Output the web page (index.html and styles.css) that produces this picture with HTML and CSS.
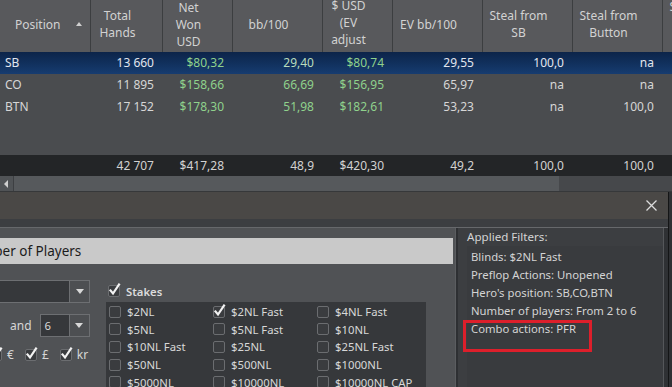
FILE: index.html
```html
<!DOCTYPE html>
<html>
<head>
<meta charset="utf-8">
<link rel="stylesheet" href="styles.css">
</head>
<body>
<div class="app">
  <div class="grid">
    <div class="cols hdr">
      <div class="hc hc-pos"><span>Position</span><span class="sort"></span></div>
      <div class="hc"><span>Total<br>Hands</span></div>
      <div class="hc"><span>Net<br>Won<br>USD</span></div>
      <div class="hc"><span>bb/100</span></div>
      <div class="hc"><span class="lift">$ USD<br>(EV<br>adjust</span></div>
      <div class="hc"><span>EV bb/100</span></div>
      <div class="hc"><span>Steal from<br>SB</span></div>
      <div class="hc"><span>Steal from<br>Button</span></div>
      <div class="hc"><span class="lift2">Steal from<br>BB</span></div>
    </div>
    <div class="cols row sel">
      <div class="c l">SB</div><div class="c">13 660</div><div class="c g">$80,32</div><div class="c gs">29,40</div><div class="c g">$80,74</div><div class="c">29,55</div><div class="c">100,0</div><div class="c">na</div><div class="c"></div>
    </div>
    <div class="cols row">
      <div class="c l">CO</div><div class="c">11 895</div><div class="c g">$158,66</div><div class="c g">66,69</div><div class="c g">$156,95</div><div class="c">65,97</div><div class="c">na</div><div class="c">na</div><div class="c"></div>
    </div>
    <div class="cols row">
      <div class="c l">BTN</div><div class="c">17 152</div><div class="c g">$178,30</div><div class="c g">51,98</div><div class="c g">$182,61</div><div class="c">53,23</div><div class="c">na</div><div class="c">100,0</div><div class="c"></div>
    </div>
    <div class="fill"></div>
    <div class="cols row total">
      <div class="c l"></div><div class="c">42 707</div><div class="c">$417,28</div><div class="c">48,9</div><div class="c">$420,30</div><div class="c">49,2</div><div class="c">100,0</div><div class="c">100,0</div><div class="c"></div>
    </div>
    <div class="hscroll">
      <div class="sbtn"><span class="larr"></span></div>
      <div class="thumb"></div>
      <div class="track"></div>
    </div>
  </div>

  <div class="dialog">
    <div class="titlebar">
      <svg class="close" viewBox="0 0 11 11"><path d="M0.5 0.5 L10.5 10.5 M10.5 0.5 L0.5 10.5"/></svg>
    </div>
    <div class="strip"></div>
    <div class="dbody">
      <div class="left">
        <div class="band">Number of Players</div>
        <div class="lower">
          <div class="players">
            <div class="combo wide"><span class="val"></span><span class="drop"><span class="darr"></span></span></div>
            <div class="androw">
              <span class="lbl">and</span>
              <div class="combo small"><span class="val">6</span><span class="drop"><span class="darr"></span></span></div>
            </div>
            <div class="cur">
              <span class="cb on"><svg viewBox="0 0 12 12"><path d="M2.5 6.5 L5 9.5 L11 0.5"/></svg></span><span class="lbl">€</span>
              <span class="cb on gap"><svg viewBox="0 0 12 12"><path d="M2.5 6.5 L5 9.5 L11 0.5"/></svg></span><span class="lbl">£</span>
              <span class="cb on gap"><svg viewBox="0 0 12 12"><path d="M2.5 6.5 L5 9.5 L11 0.5"/></svg></span><span class="lbl">kr</span>
            </div>
          </div>
          <div class="stakes">
            <div class="sh">
              <span class="cb on"><svg viewBox="0 0 12 12"><path d="M2.5 6.5 L5 9.5 L11 0.5"/></svg></span><span class="shl">Stakes</span>
            </div>
            <div class="sbox">
              <div class="it"><span class="cb"></span>$2NL</div>
              <div class="it"><span class="cb on"><svg viewBox="0 0 12 12"><path d="M2.5 6.5 L5 9.5 L11 0.5"/></svg></span>$2NL Fast</div>
              <div class="it"><span class="cb"></span>$4NL Fast</div>
              <div class="it"><span class="cb"></span>$5NL</div>
              <div class="it"><span class="cb"></span>$5NL Fast</div>
              <div class="it"><span class="cb"></span>$10NL</div>
              <div class="it"><span class="cb"></span>$10NL Fast</div>
              <div class="it"><span class="cb"></span>$25NL</div>
              <div class="it"><span class="cb"></span>$25NL Fast</div>
              <div class="it"><span class="cb"></span>$50NL</div>
              <div class="it"><span class="cb"></span>$500NL</div>
              <div class="it"><span class="cb"></span>$1000NL</div>
              <div class="it"><span class="cb"></span>$5000NL</div>
              <div class="it"><span class="cb"></span>$10000NL</div>
              <div class="it"><span class="cb"></span>$10000NL CAP</div>
            </div>
          </div>
        </div>
      </div>
      <div class="divider"></div>
      <div class="panel">
        <div class="ptitle">Applied Filters:</div>
        <div class="plist">
          <div class="pi">Blinds: $2NL Fast</div>
          <div class="pi">Preflop Actions: Unopened</div>
          <div class="pi">Hero's position: SB,CO,BTN</div>
          <div class="pi">Number of players: From 2 to 6</div>
          <div class="pi">Combo actions: PFR</div>
        </div>
        <div class="mark"></div>
      </div>
      <div class="pscroll"></div>
    </div>
  </div>
</div>
</body>
</html>
```

FILE: styles.css
```css
* { box-sizing: border-box; }
html, body { margin: 0; padding: 0; }
body {
  width: 672px;
  height: 387px;
  overflow: hidden;
  background: #2f3134;
  font-family: "Noto Sans", "Open Sans", sans-serif;
  color: #d6d6d6;
}
.app {
  width: 672px;
  height: 387px;
  overflow: hidden;
  display: flex;
  flex-direction: column;
}

/* ---------- grid ---------- */
.grid {
  height: 192px;
  background: #4a4c4f;
  display: flex;
  flex-direction: column;
  flex: none;
}
.cols {
  display: grid;
  grid-template-columns: 91px 72px 70px 90px 70px 90px 90px 90px 90px;
  width: max-content;
}
.hdr {
  height: 52px;
  background: #58595c;
  font-size: 12px;
  line-height: 17px;
  color: #d2d2d2;
}
.hc {
  border-right: 1px solid #3c3e40;
  display: flex;
  align-items: center;
  justify-content: center;
  padding-right: 18px;
  padding-bottom: 4px;
  text-align: center;
  overflow: hidden;
}
.hc-pos {
  justify-content: flex-start;
  padding-left: 15px;
  padding-right: 8px;
}
.sort {
  margin-left: auto;
  width: 0;
  height: 0;
  border-left: 3px solid transparent;
  border-right: 3px solid transparent;
  border-bottom: 4px solid #d0d0d0;
}
.lift { margin-top: -3px; }
.lift2 { margin-top: -18px; white-space: nowrap; }

.row {
  height: 22px;
  font-size: 12px;
  line-height: 22px;
}
.c {
  text-align: right;
  padding-right: 9px;
  white-space: nowrap;
}
.c.l {
  text-align: left;
  padding-left: 5px;
}
.g { color: #8fd18c; }
.gs { color: #b9dcbc; }
.sel {
  background: linear-gradient(#0c2449, #163c70);
  color: #e2e6ee;
}
.fill { flex: 1; }
.total {
  height: 21px;
  line-height: 21px;
  background: #232527;
  color: #d2d2d2;
}
.hscroll {
  height: 16px;
  display: flex;
  background: #46484b;
  border-bottom: 1px solid #36383a;
}
.sbtn {
  width: 14px;
  background: #505356;
  border-right: 1px solid #3d3f42;
  display: flex;
  align-items: center;
  padding-left: 4px;
}
.larr {
  width: 0;
  height: 0;
  border-top: 4px solid transparent;
  border-bottom: 4px solid transparent;
  border-right: 4px solid #cfcfcf;
}
.thumb {
  width: 545px;
  background: #56595c;
}
.track { flex: 1; }

/* ---------- dialog ---------- */
.dialog {
  margin-left: -60px;
  width: 729px;
  flex: 1;
  display: flex;
  flex-direction: column;
  border-right: 1px solid #141516;
  background: #505255;
  overflow: hidden;
}
.titlebar {
  height: 27px;
  background: #4a4846;
  display: flex;
  align-items: center;
  justify-content: flex-end;
  padding-right: 11px;
  flex: none;
}
.close {
  width: 11px;
  height: 11px;
  stroke: #dcdcdc;
  stroke-width: 1.3;
  fill: none;
}
.strip {
  height: 9px;
  background: #3c3e41;
  border-bottom: 1px solid #66686b;
  flex: none;
}
.dbody {
  flex: 1;
  display: flex;
  min-height: 0;
}
.left {
  width: 515px;
  flex: none;
  padding-top: 10px;
  font-size: 11.3px;
}
.band {
  height: 26px;
  background: #c9c9c9;
  color: #1c1c1c;
  font-size: 13.5px;
  line-height: 26px;
  padding-left: 23px;
  margin-right: 2px;
}
.lower {
  display: flex;
}
.players {
  width: 166px;
  flex: none;
  display: flex;
  flex-direction: column;
}
.combo {
  height: 23px;
  display: flex;
  border: 1px solid #6d6f72;
  background: #36383b;
}
.combo.wide {
  margin-top: 16px;
  margin-left: 40px;
  width: 110px;
}
.combo .val {
  flex: 1;
  padding-left: 4px;
  line-height: 21px;
  color: #dadada;
}
.drop {
  width: 20px;
  border-left: 1px solid #6d6f72;
  background: #4d4f52;
  display: flex;
  align-items: center;
  justify-content: center;
}
.darr {
  width: 0;
  height: 0;
  border-left: 4px solid transparent;
  border-right: 4px solid transparent;
  border-top: 5px solid #d8d8d8;
}
.androw {
  margin-top: 11px;
  padding-left: 70px;
  display: flex;
  align-items: center;
}
.androw .lbl { margin-right: 8px; font-size: 12px; }
.combo.small { width: 50px; }
.cur {
  margin-top: 11px;
  padding-left: 50px;
  display: flex;
  align-items: center;
  height: 13px;
}
.cur .lbl { margin-left: 5px; font-size: 12px; }
.cb {
  width: 12px;
  height: 12px;
  flex: none;
  border: 1px solid #6b6d70;
  border-radius: 2px;
  background: #3a3c3f;
  display: inline-block;
  position: relative;
}
.cb svg {
  position: absolute;
  left: -1px;
  top: -2px;
  width: 12px;
  height: 12px;
  overflow: visible;
  fill: none;
  stroke: #f2f2f2;
  stroke-width: 2.2;
  stroke-linecap: square;
}
.cb.gap { margin-left: 11px; }

.stakes {
  width: 320px;
  flex: none;
  padding-top: 18px;
}
.sh {
  height: 18px;
  display: flex;
  align-items: center;
  padding-left: 2px;
}
.shl {
  margin-left: 6px;
  font-weight: 600;
  color: #dcdcdc;
}
.sbox {
  margin-top: 2px;
  background: #36383b;
  display: grid;
  grid-template-columns: 104px 104px 112px;
  grid-auto-rows: 17.6px;
  padding: 1px 0 0 3px;
  height: 120px;
}
.it {
  display: flex;
  align-items: center;
  white-space: nowrap;
  color: #d8d8d8;
}
.it .cb { margin-right: 6px; }

.divider {
  width: 3px;
  flex: none;
  background: #2e3033;
  border-left: 1px solid #5b5d60;
}
.panel {
  width: 205px;
  flex: none;
  background: #3c3e41;
  position: relative;
  font-size: 11.3px;
  color: #d4d4d4;
}
.ptitle {
  padding-left: 9px;
  height: 17px;
  line-height: 17px;
  font-size: 11.6px;
}
.plist {
  margin: 1px 0 0 9px;
  background: #393b3e;
  padding: 2px 0 0 4px;
  height: 200px;
}
.pi {
  height: 18px;
  line-height: 18px;
  white-space: nowrap;
}
.mark {
  position: absolute;
  left: 5px;
  top: 92px;
  width: 129px;
  height: 32px;
  border: 3px solid #dd1f2b;
}
.pscroll {
  flex: 1;
  background: #2f3134;
  border-left: 1px solid #55575a;
}
```
